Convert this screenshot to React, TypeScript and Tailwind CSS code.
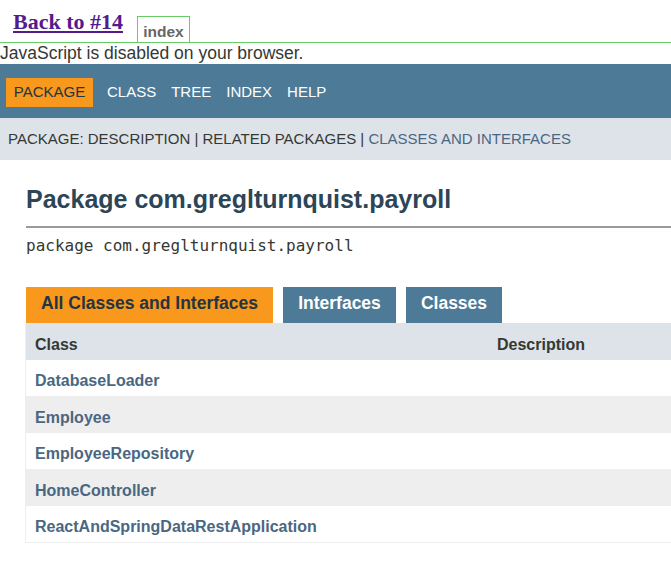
const rows = [
  "DatabaseLoader",
  "Employee",
  "EmployeeRepository",
  "HomeController",
  "ReactAndSpringDataRestApplication",
];

const navItems = ["CLASS", "TREE", "INDEX", "HELP"];

export default function App() {
  return (
    <div className="min-h-[566px] w-[671px] overflow-hidden bg-white font-['Liberation_Sans',Arial,sans-serif] text-[#353833]">
      {/* Top tab strip */}
      <div className="flex h-[43px] items-end border-b border-[#66cc66]">
        <a
          href="#"
          className="mb-[9px] ml-[13px] font-['Liberation_Serif',serif] text-[22px] font-bold leading-none text-[#551a8b] underline"
        >
          Back to #14
        </a>
        <div className="ml-[14px] flex h-[26px] w-[53px] items-end justify-center border-x border-t border-[#66cc66] pb-[3px] text-[15.5px] font-bold leading-none text-[#666666]">
          index
        </div>
      </div>
      <div className="h-[21px] text-[17.5px] leading-[20px] text-[#353833]">
        JavaScript is disabled on your browser.
      </div>

      {/* Nav bar */}
      <div className="flex h-[54px] items-center bg-[#4d7a97] pl-[6px] pt-[2px] text-[15px] uppercase">
        <span className="flex h-[29px] w-[87px] items-center justify-center bg-[#f8981d] text-[#253441]">
          PACKAGE
        </span>
        <div className="ml-[14px] flex gap-[15px] text-white">
          {navItems.map((n) => (
            <span key={n}>{n}</span>
          ))}
        </div>
      </div>
      <div className="flex h-[42px] items-center bg-[#dee3e9] pl-[8px] text-[15px] text-[#353833]">
        PACKAGE: DESCRIPTION | RELATED PACKAGES |&nbsp;
        <span className="text-[#4a6782]">CLASSES AND INTERFACES</span>
      </div>

      {/* Content */}
      <div className="pl-[26px]">
        <h1 className="mt-[25px] text-[25px] font-bold leading-[28px] text-[#2c4557]">
          Package com.greglturnquist.payroll
        </h1>
        <hr className="mt-[13px] border-t-2 border-[#9a9a9a]" />
        <div className="mt-[8px] font-['DejaVu_Sans_Mono',monospace] text-[16px] leading-[20px] text-[#353833]">
          package com.greglturnquist.payroll
        </div>

        <div className="mt-[31px] flex gap-[10px] text-[17.5px] font-bold">
          <span className="flex h-[36px] w-[247px] items-center justify-center bg-[#f8981d] pb-[4px] text-[#253441]">
            All Classes and Interfaces
          </span>
          <span className="flex h-[36px] w-[113px] items-center justify-center bg-[#4d7a97] pb-[4px] text-white">
            Interfaces
          </span>
          <span className="flex h-[36px] w-[96px] items-center justify-center bg-[#4d7a97] pb-[4px] text-white">
            Classes
          </span>
        </div>

        <div className="-ml-px border-b border-l border-[#eeeeee] text-[16px] font-bold">
          <div className="flex h-[37px] items-center bg-[#dee3e9] pt-[6px] text-[#353833]">
            <span className="w-[462px] pl-[9px]">Class</span>
            <span className="pl-[9px]">Description</span>
          </div>
          {rows.map((r, i) => (
            <div
              key={r}
              className={`flex items-center pl-[9px] pt-[6px] text-[#4a6782] ${
                i % 2 === 0 ? "h-[36px] bg-white" : "h-[37px] bg-[#eeeeee]"
              }`}
            >
              {r}
            </div>
          ))}
        </div>
      </div>
    </div>
  );
}
